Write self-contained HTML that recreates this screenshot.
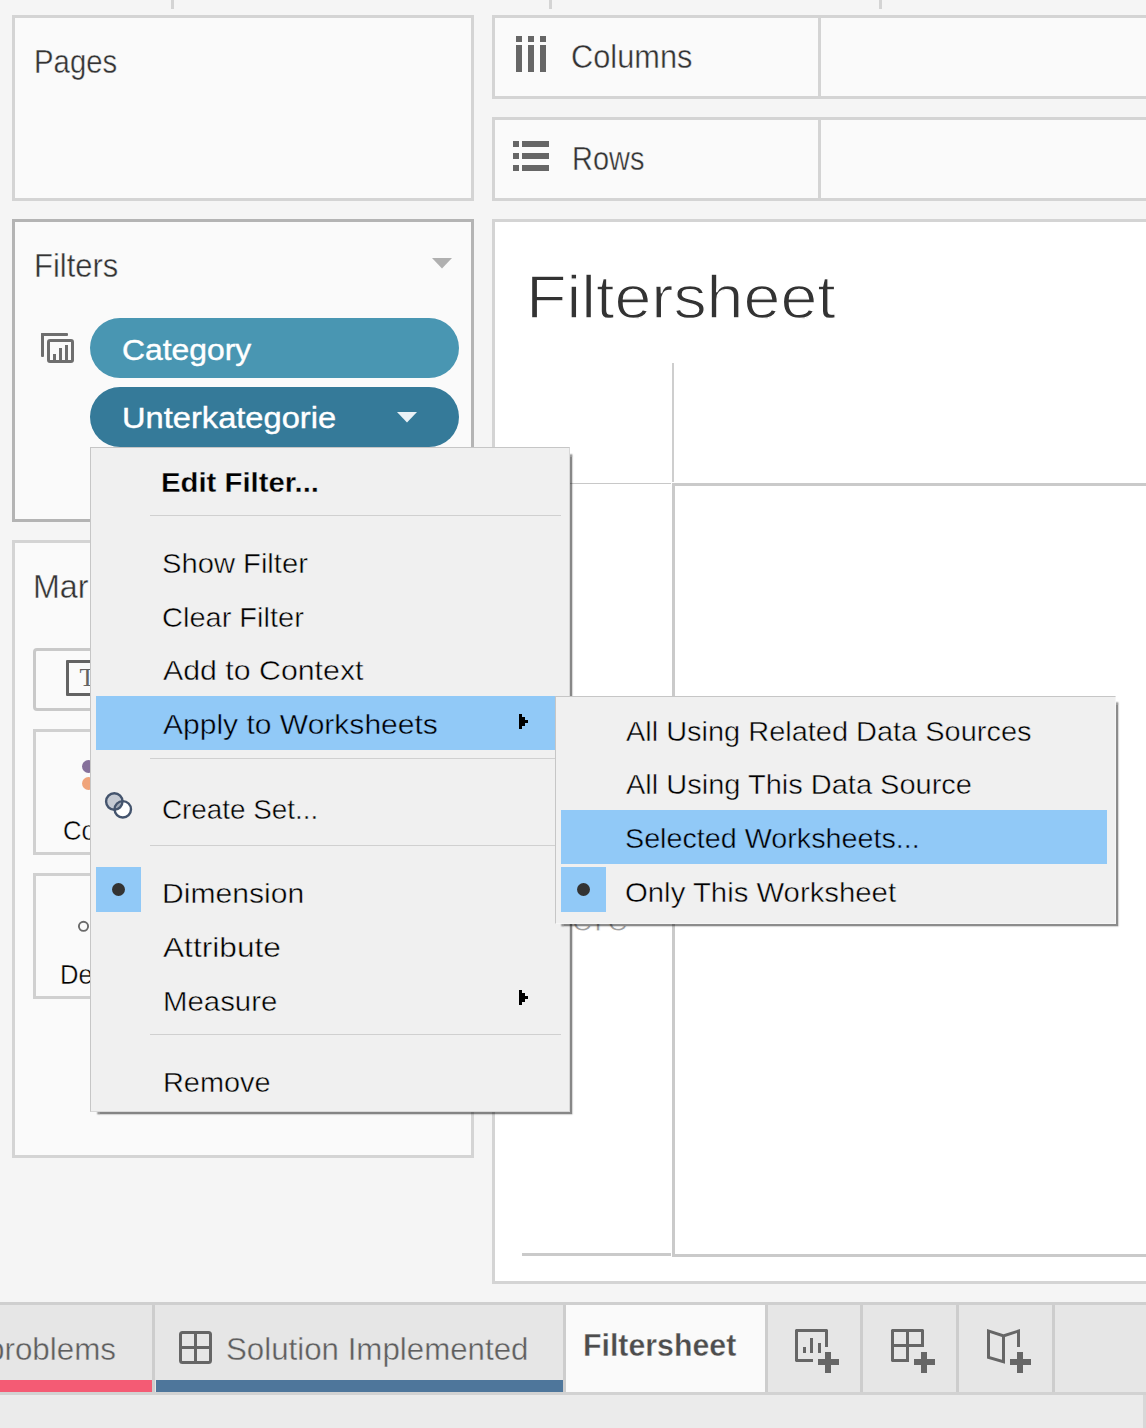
<!DOCTYPE html>
<html><head><meta charset="utf-8">
<style>
html,body{margin:0;padding:0;}
body{width:1146px;height:1428px;overflow:hidden;background:#f5f5f5;position:relative;font-family:"Liberation Sans",sans-serif;}
.abs{position:absolute;box-sizing:border-box;}
.panel{position:absolute;box-sizing:border-box;background:#fafafa;border:3px solid #d4d4d4;}
.t{position:absolute;white-space:nowrap;line-height:1;transform-origin:0 50%;}
.sep{position:absolute;height:1px;background:#d0d0d0;}
.hl{position:absolute;background:#91c9f7;}
.vs{position:absolute;top:1305px;width:3px;height:87px;background:#cdcdcd;}
</style></head><body>
<!-- top ticks -->
<div class="abs" style="left:171px;top:0;width:3px;height:9px;background:#d4d4d4"></div>
<div class="abs" style="left:549px;top:0;width:3px;height:9px;background:#d4d4d4"></div>
<div class="abs" style="left:879px;top:0;width:3px;height:9px;background:#d4d4d4"></div>

<!-- Pages -->
<div class="panel" style="left:12px;top:15px;width:462px;height:186px"></div>

<!-- Columns / Rows -->
<div class="panel" style="left:492px;top:15px;width:700px;height:84px"></div>
<div class="abs" style="left:818px;top:18px;width:3px;height:78px;background:#d4d4d4"></div>
<div class="panel" style="left:492px;top:117px;width:700px;height:84px"></div>
<div class="abs" style="left:818px;top:120px;width:3px;height:78px;background:#d4d4d4"></div>
<svg class="abs" style="left:516px;top:36px" width="30" height="36"><g fill="#666"><rect x="0" y="0" width="6" height="6"/><rect x="12" y="0" width="6" height="6"/><rect x="24" y="0" width="6" height="6"/><rect x="0" y="9" width="6" height="27"/><rect x="12" y="9" width="6" height="27"/><rect x="24" y="9" width="6" height="27"/></g></svg>
<svg class="abs" style="left:513px;top:141px" width="36" height="30"><g fill="#666"><rect x="0" y="0" width="6" height="6"/><rect x="0" y="12" width="6" height="6"/><rect x="0" y="24" width="6" height="6"/><rect x="9" y="0" width="27" height="6"/><rect x="9" y="12" width="27" height="6"/><rect x="9" y="24" width="27" height="6"/></g></svg>

<!-- Filters -->
<div class="panel" style="left:12px;top:219px;width:462px;height:303px;border-color:#b4b4b4"></div>
<svg class="abs" style="left:432px;top:258px" width="20" height="11"><path d="M0 0H20L10 10.5Z" fill="#b0b0b0"/></svg>
<svg class="abs" style="left:41px;top:333px" width="33" height="30"><g fill="#6e6e6e"><rect x="0" y="0" width="27" height="3" rx="1"/><rect x="0" y="0" width="3" height="24" rx="1"/><rect x="12" y="21" width="3" height="6"/><rect x="18" y="15" width="3" height="12"/><rect x="24" y="12" width="3" height="15"/></g><rect x="7.5" y="7.5" width="24" height="21" rx="1.5" fill="none" stroke="#6e6e6e" stroke-width="3"/></svg>
<div class="abs" style="left:90px;top:318px;width:369px;height:60px;border-radius:30px;background:#4996b2"></div>
<div class="abs" style="left:90px;top:387px;width:369px;height:60px;border-radius:30px;background:#357a99"></div>
<svg class="abs" style="left:397px;top:412px" width="20" height="11"><path d="M0 0H20L10 10.5Z" fill="#eaf2f7"/></svg>

<!-- Marks -->
<div class="panel" style="left:12px;top:540px;width:462px;height:618px"></div>
<div class="t" id="marks" style="left:33.3px;top:570.9px;font-size:32.4px;color:#333;transform:scaleX(.995);-webkit-text-stroke:0.4px #fafafa">Marks</div>
<div class="panel" style="left:33px;top:648px;width:200px;height:63px;border-radius:4px;border-color:#c9c9c9"></div>
<div class="abs" style="left:66px;top:660px;width:36px;height:36px;border:3px solid #636363;border-radius:1px"></div>
<div class="t" style="left:79.5px;top:664.6px;font-family:'Liberation Serif',serif;font-size:26px;color:#636363">T</div>
<div class="panel" style="left:33px;top:729px;width:120px;height:126px;border-color:#d0d0d0"></div>
<div class="abs" style="left:82px;top:760px;width:13px;height:13px;border-radius:50%;background:#86719b"></div>
<div class="abs" style="left:82px;top:777px;width:13px;height:13px;border-radius:50%;background:#f0a47a"></div>
<div class="t" style="left:62.5px;top:816.5px;font-size:27.5px;color:#000;transform:scaleX(.93);-webkit-text-stroke:0.4px #fafafa">Color</div>
<div class="panel" style="left:33px;top:873px;width:120px;height:126px;border-color:#d0d0d0"></div>
<svg class="abs" style="left:76px;top:919px" width="16" height="16"><circle cx="7.5" cy="7.3" r="4.6" fill="none" stroke="#6a6a6a" stroke-width="1.9"/></svg>
<div class="t" style="left:60px;top:960.5px;font-size:27.5px;color:#000;transform:scaleX(.93);-webkit-text-stroke:0.4px #fafafa">Detail</div>

<!-- View -->
<div class="panel" style="left:492px;top:219px;width:700px;height:1065px;background:#fff"></div>
<div class="abs" style="left:672px;top:363px;width:2px;height:119px;background:#cecece"></div>
<div class="abs" style="left:560px;top:483px;width:111px;height:1px;background:#c8c8c8"></div>
<div class="abs" style="left:672px;top:483px;width:500px;height:774px;border:3px solid #cacaca"></div>
<div class="abs" style="left:522px;top:1253px;width:149px;height:3px;background:#cacaca"></div>
<div class="t" id="here" style="left:549px;top:896.5px;font-size:40px;color:#a0a0a0;-webkit-text-stroke:1px #fff">here</div>

<!-- Tab bar -->
<div class="abs" style="left:0;top:1302px;width:1146px;height:93px;background:#e6e6e6;border-top:3px solid #cfcfcf;border-bottom:3px solid #d2d2d2"></div>
<div class="abs" style="left:0;top:1395px;width:1146px;height:33px;background:#ebebeb;border-right:3px solid #d8d8d8"></div>
<div class="abs" style="left:566px;top:1305px;width:199px;height:87px;background:#fafafa"></div>
<div class="abs" style="left:0;top:1380px;width:152px;height:12px;background:#f45b74"></div>
<div class="abs" style="left:156px;top:1380px;width:407px;height:12px;background:#4e769b"></div>
<div class="vs" style="left:152px"></div>
<div class="vs" style="left:563px"></div>
<div class="vs" style="left:765px"></div>
<div class="vs" style="left:860px"></div>
<div class="vs" style="left:956px"></div>
<div class="vs" style="left:1052px"></div>
<div class="t" id="tab1" style="left:-13px;top:1334.2px;font-size:31.7px;color:#5e5e5e;transform:scaleX(.99);-webkit-text-stroke:0.4px #e6e6e6">problems</div>
<svg class="abs" style="left:179px;top:1331px" width="33" height="33"><rect x="1.5" y="1.5" width="30" height="30" rx="2" fill="none" stroke="#666" stroke-width="3"/><rect x="15" y="0" width="3" height="33" fill="#666"/><rect x="0" y="15" width="33" height="3" fill="#666"/></svg>
<!-- new worksheet -->
<svg class="abs" style="left:795px;top:1329px" width="45" height="45"><g fill="#666"><path d="M1 0H32L33 1V18H30V3H3V30H18V33H1L0 32V1Z"/><rect x="8" y="18" width="3" height="6"/><rect x="15" y="9" width="3" height="15"/><rect x="23" y="14" width="3" height="10"/><rect x="30" y="23" width="6" height="21"/><rect x="23" y="30" width="21" height="6"/></g></svg>
<!-- new dashboard -->
<svg class="abs" style="left:891px;top:1329px" width="45" height="45"><g fill="#666"><path d="M1 0H32L33 1V18H18V33H1L0 32V1ZM3 3V15H15V3ZM18 3V15H30V3ZM3 18V30H15V18Z" fill-rule="evenodd"/><rect x="30" y="23" width="6" height="21"/><rect x="23" y="30" width="21" height="6"/></g></svg>
<!-- new story -->
<svg class="abs" style="left:987px;top:1329px" width="45" height="45"><g fill="#666"><path d="M0 0L16.5 5.3L33 0V18H30V4.1L18 7.9V34.8L0 29.6ZM3 4.1V27.3L15 30.8V7.9Z" fill-rule="evenodd"/><rect x="30" y="23" width="6" height="21"/><rect x="23" y="30" width="21" height="6"/></g></svg>

<!-- MENU -->
<div class="abs" style="left:94px;top:451px;width:476px;height:661px;box-shadow:2.6px 2.6px 1.5px rgba(0,0,0,.47)"></div>
<div class="abs" id="menu" style="left:90px;top:447px;width:480px;height:665px;background:#f0f0f0;border:1px solid #c6c6c6;border-right-color:#d8d8d8;border-bottom-color:#d8d8d8"></div>
<div class="hl" style="left:96px;top:696px;width:468px;height:54px"></div>
<div class="hl" style="left:96px;top:867px;width:45px;height:45px"></div>
<div class="sep" style="left:150px;top:515px;width:411px"></div>
<div class="sep" style="left:150px;top:758px;width:411px"></div>
<div class="sep" style="left:150px;top:845px;width:411px"></div>
<div class="sep" style="left:150px;top:1034px;width:411px"></div>
<div class="abs" style="left:112px;top:883px;width:13px;height:13px;border-radius:50%;background:#333"></div>
<svg class="abs" style="left:519px;top:714px" width="9" height="15"><path d="M0 0H3V3H6V6H9V9H6V12H3V15H0Z" fill="#000"/></svg>
<svg class="abs" style="left:519px;top:990px" width="9" height="15"><path d="M0 0H3V3H6V6H9V9H6V12H3V15H0Z" fill="#000"/></svg>
<svg class="abs" style="left:103px;top:790px" width="32" height="32"><defs><clipPath id="c2"><circle cx="19.8" cy="19.3" r="8.2"/></clipPath></defs><circle cx="11.3" cy="11.5" r="8.2" fill="#c5cad3"/><circle cx="19.8" cy="19.3" r="8.2" fill="#fff"/><circle cx="11.3" cy="11.5" r="8.2" fill="#a0a8b5" clip-path="url(#c2)"/><circle cx="19.8" cy="19.3" r="8.2" fill="none" stroke="#44546d" stroke-width="2.4"/><circle cx="11.3" cy="11.5" r="8.2" fill="none" stroke="#44546d" stroke-width="2.4"/></svg>

<!-- SUBMENU -->
<div class="abs" style="left:558px;top:699px;width:558px;height:225px;box-shadow:2.6px 2.6px 1.5px rgba(0,0,0,.45)"></div>
<div class="abs" id="submenu" style="left:555px;top:696px;width:561px;height:228px;background:#f0f0f0;border:1px solid #c6c6c6;border-right-color:#f6f6f6;border-bottom-color:#f6f6f6"></div>
<div class="hl" style="left:561px;top:810px;width:546px;height:54px"></div>
<div class="hl" style="left:561px;top:867px;width:45px;height:45px"></div>
<div class="abs" style="left:576.8px;top:883px;width:13px;height:13px;border-radius:50%;background:#333"></div>
<div class="t" id="pages" style="left:33.62px;top:46.27px;font-size:32.4px;transform:scaleX(0.9057);color:#333;-webkit-text-stroke:0.4px #fafafa;">Pages</div>
<div class="t" id="columns" style="left:570.88px;top:41.27px;font-size:32.4px;transform:scaleX(0.9496);color:#333;-webkit-text-stroke:0.4px #fafafa;">Columns</div>
<div class="t" id="rows" style="left:571.64px;top:142.87px;font-size:32.4px;transform:scaleX(0.8936);color:#333;-webkit-text-stroke:0.4px #fafafa;">Rows</div>
<div class="t" id="filters" style="left:33.91px;top:250.27px;font-size:32.4px;transform:scaleX(0.9560);color:#333;-webkit-text-stroke:0.4px #fafafa;">Filters</div>
<div class="t" id="category" style="left:121.90px;top:334.65px;font-size:30.3px;transform:scaleX(1.0512);color:#fff;-webkit-text-stroke:0.4px #fff;">Category</div>
<div class="t" id="unterk" style="left:122.22px;top:402.95px;font-size:30.3px;transform:scaleX(1.0774);color:#fff;-webkit-text-stroke:0.4px #fff;">Unterkategorie</div>
<div class="t" id="title" style="left:525.65px;top:266.22px;font-size:62px;transform:scaleX(1.0701);color:#333;-webkit-text-stroke:1.3px #fff;">Filtersheet</div>
<div class="t" id="tab2" style="left:226.23px;top:1334.17px;font-size:31.7px;transform:scaleX(0.9868);color:#5e5e5e;-webkit-text-stroke:0.4px #e6e6e6;">Solution Implemented</div>
<div class="t" id="tab3" style="left:582.63px;top:1330.93px;font-size:30.8px;transform:scaleX(0.9838);color:#4d4d4d;font-weight:bold;-webkit-text-stroke:0.35px #fafafa;">Filtersheet</div>
<div class="t" id="m0" style="left:161.29px;top:469.40px;font-size:28px;transform:scaleX(1.0469);color:#000;font-weight:bold;-webkit-text-stroke:0.3px #f0f0f0;">Edit Filter...</div>
<div class="t" id="m1" style="left:162.35px;top:549.80px;font-size:28px;transform:scaleX(1.0417);color:#000;-webkit-text-stroke:0.45px #f0f0f0;">Show Filter</div>
<div class="t" id="m2" style="left:162.35px;top:603.80px;font-size:28px;transform:scaleX(1.0356);color:#000;-webkit-text-stroke:0.45px #f0f0f0;">Clear Filter</div>
<div class="t" id="m3" style="left:163.38px;top:657.10px;font-size:28px;transform:scaleX(1.0822);color:#000;-webkit-text-stroke:0.45px #f0f0f0;">Add to Context</div>
<div class="t" id="m4" style="left:163.38px;top:711.10px;font-size:28px;transform:scaleX(1.0725);color:#000;-webkit-text-stroke:0.45px #91c9f7;">Apply to Worksheets</div>
<div class="t" id="m5" style="left:162.41px;top:796.10px;font-size:28px;transform:scaleX(0.9941);color:#000;-webkit-text-stroke:0.45px #f0f0f0;">Create Set...</div>
<div class="t" id="m6" style="left:162.47px;top:879.80px;font-size:28px;transform:scaleX(1.0744);color:#000;-webkit-text-stroke:0.45px #f0f0f0;">Dimension</div>
<div class="t" id="m7" style="left:163.36px;top:933.80px;font-size:28px;transform:scaleX(1.1311);color:#000;-webkit-text-stroke:0.45px #f0f0f0;">Attribute</div>
<div class="t" id="m8" style="left:162.52px;top:987.80px;font-size:28px;transform:scaleX(1.0491);color:#000;-webkit-text-stroke:0.45px #f0f0f0;">Measure</div>
<div class="t" id="m9" style="left:162.55px;top:1068.80px;font-size:28px;transform:scaleX(1.0314);color:#000;-webkit-text-stroke:0.45px #f0f0f0;">Remove</div>
<div class="t" id="s0" style="left:626.00px;top:717.80px;font-size:28px;transform:scaleX(1.0338);color:#000;-webkit-text-stroke:0.45px #f0f0f0;">All Using Related Data Sources</div>
<div class="t" id="s1" style="left:626.00px;top:771.40px;font-size:28px;transform:scaleX(1.0357);color:#000;-webkit-text-stroke:0.45px #f0f0f0;">All Using This Data Source</div>
<div class="t" id="s2" style="left:625.37px;top:825.40px;font-size:28px;transform:scaleX(1.0254);color:#000;-webkit-text-stroke:0.45px #91c9f7;">Selected Worksheets...</div>
<div class="t" id="s3" style="left:625.34px;top:879.40px;font-size:28px;transform:scaleX(1.0473);color:#000;-webkit-text-stroke:0.45px #f0f0f0;">Only This Worksheet</div>
</body></html>
